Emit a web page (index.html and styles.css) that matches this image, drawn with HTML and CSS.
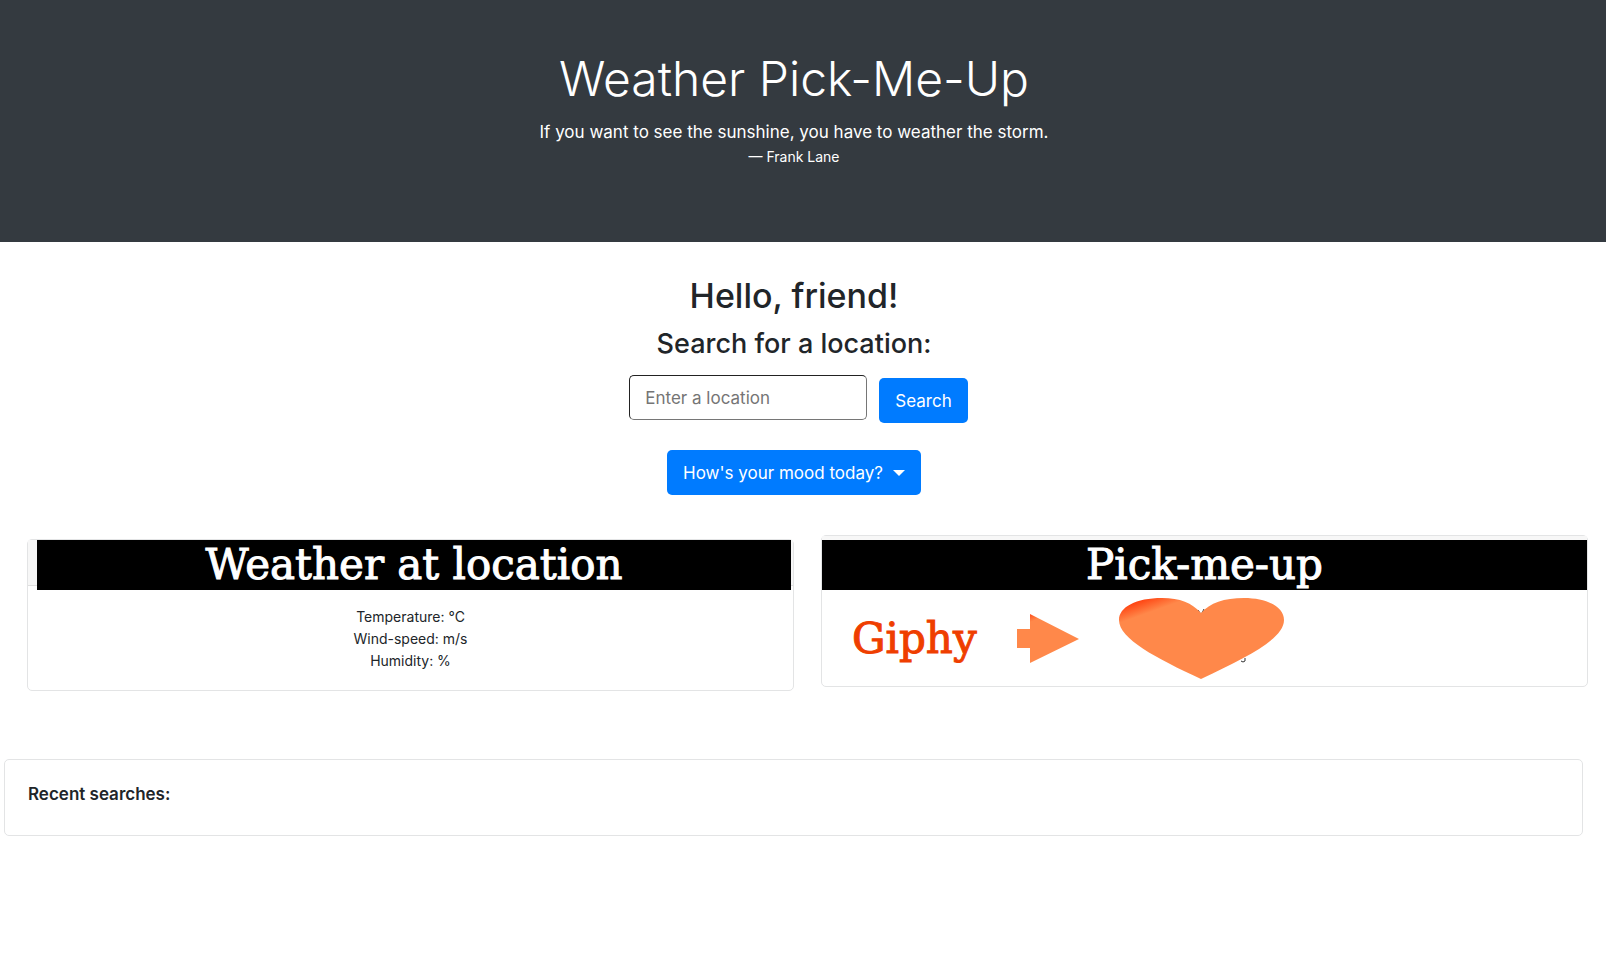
FILE: index.html
```html
<!DOCTYPE html>
<html lang="en">
<head>
<meta charset="utf-8">
<meta name="viewport" content="width=device-width, initial-scale=1">
<title>Weather Pick-Me-Up</title>
<link rel="stylesheet" href="styles.css">
</head>
<body>
<header class="hero">
  <h1 class="hero-title">Weather Pick-Me-Up</h1>
  <p class="hero-quote">If you want to see the sunshine, you have to weather the storm.</p>
  <p class="hero-author">— Frank Lane</p>
</header>
<main>
  <section class="search">
    <h2 class="greeting">Hello, friend!</h2>
    <h3 class="prompt"><label for="location">Search for a location:</label></h3>
    <form class="search-form">
      <input class="location" id="location" type="text" placeholder="Enter a location">
      <button class="btn search-btn" type="button">Search</button>
    </form>
    <button class="btn mood" type="button" aria-haspopup="true">How's your mood today?<span class="caret"></span></button>
  </section>
  <div class="cards">
    <section class="card weather">
      <div class="card-header"><h2 class="banner">Weather at location</h2></div>
      <ul class="readings">
        <li>Temperature: °C</li>
        <li>Wind-speed: m/s</li>
        <li>Humidity: %</li>
      </ul>
    </section>
    <section class="card pickup">
      <div class="card-header"><h2 class="banner">Pick-me-up</h2></div>
      <div class="giphy">
        <span class="giphy-name">Giphy</span>
        <svg class="arrow" viewBox="0 0 62 50" aria-hidden="true">
          <defs><linearGradient id="arrowFill" gradientUnits="userSpaceOnUse" x1="13" y1="0" x2="16" y2="7"><stop offset="0" stop-color="#ff4d1a"/><stop offset="1" stop-color="#ff884a"/></linearGradient></defs>
          <path d="M0 15H13V0L62 25L13 49V34H0Z" fill="url(#arrowFill)"/>
        </svg>
        <svg class="heart" viewBox="0 0 165 82" aria-hidden="true">
          <defs><linearGradient id="heartFill" gradientUnits="userSpaceOnUse" x1="18" y1="3" x2="23" y2="17"><stop offset="0" stop-color="#ff4210"/><stop offset="1" stop-color="#ff884a"/></linearGradient></defs>
          <path d="M79 12l2 3M85 11l-2 4M122 63q2 2 4 0v-3" fill="none" stroke="#333" stroke-width="1"/>
          <path d="M82 15C73 5 61 0 43 0C17 0 0 9 0 22C0 41 37 60 82 81C128 59 165 41 165 22C165 9 148 0 125 0C105 0 91 5 82 15Z" fill="url(#heartFill)"/>
        </svg>
      </div>
    </section>
  </div>
  <section class="card recent"><h2 class="recent-title">Recent searches:</h2></section>
</main>
</body>
</html>
```
FILE: styles.css
```css
* { box-sizing: border-box; }
body {
  margin: 0;
  background: #fff;
  color: #212529;
  font-family: Inter, "Liberation Sans", sans-serif;
  font-size: 14px;
  line-height: 22px;
}
h1, h2, h3, p, ul { margin: 0; padding: 0; font-weight: 500; }
.hero {
  padding: 47px 18px 74px 0;
  background: #343a40;
  color: #fff;
  text-align: center;
}
.hero-title { font-size: 48px; line-height: 64px; font-weight: 300; }
.hero-quote { padding-top: 7px; font-size: 17px; line-height: 28px; font-weight: 400; }
.hero-author { font-weight: 400; }
.search {
  display: flex;
  flex-direction: column;
  align-items: center;
  padding: 32px 18px 0 0;
}
.greeting { font-size: 34px; line-height: 44px; }
.prompt { padding-top: 8px; font-size: 27px; line-height: 36px; }
.search-form {
  display: flex;
  gap: 12px;
  align-items: flex-start;
  padding: 13px 0 0 9px;
}
.location {
  width: 238px;
  height: 45px;
  padding: 0 15px;
  border: 1px solid;
  border-color: #222 #767676 #767676 #222;
  border-radius: 5px;
  background: #fff;
  color: #495057;
  font: 17px/28px Inter, "Liberation Sans", sans-serif;
}
.location::placeholder { color: #757575; }
.btn {
  height: 45px;
  padding: 0 16px;
  border: 0;
  border-radius: 5px;
  background: #007bff;
  color: #fff;
  font: 17px/28px Inter, "Liberation Sans", sans-serif;
  white-space: nowrap;
}
.search-btn { margin-top: 3px; }
.mood { display: flex; align-items: center; gap: 10px; margin-top: 27px; }
.caret {
  border: 6px solid transparent;
  border-top-color: #fff;
  border-bottom: 0;
}
.card { border: 1px solid #e3e4e5; border-radius: 5px; }
.cards {
  display: grid;
  grid-template-columns: 1fr 1fr;
  gap: 27px;
  align-items: start;
  padding: 40px 18px 0 27px;
}
.card-header {
  height: 46px;
  border-bottom: 1px solid #dfdfdf;
  background: #f7f7f7;
}
.banner {
  height: 50px;
  background: #000;
  color: #fff;
  font: 400 42px/50px "DejaVu Serif", serif;
  -webkit-text-stroke: 1px currentColor;
  text-align: center;
}
.weather { min-height: 152px; margin-top: 4px; }
.weather .banner { margin: 0 2px 0 9px; }
.readings {
  padding-top: 20px;
  list-style: none;
  text-align: center;
}
.readings li { font-weight: 400; }
.pickup { min-height: 152px; }
.pickup .card-header { padding-top: 4px; }
.giphy {
  display: flex;
  align-items: center;
  gap: 40px;
  padding: 16px 0 0 30px;
}
.giphy-name {
  color: #ef3e00;
  font: 42px/50px "DejaVu Serif", serif;
  -webkit-text-stroke: 1px currentColor;
}
.arrow { width: 62px; height: 50px; }
.heart { width: 165px; height: 82px; }
.recent {
  margin: 68px 23px 0 4px;
  padding: 20px 23px 27px;
}
.recent-title { font-size: 17px; line-height: 28px; font-weight: 600; }
```
